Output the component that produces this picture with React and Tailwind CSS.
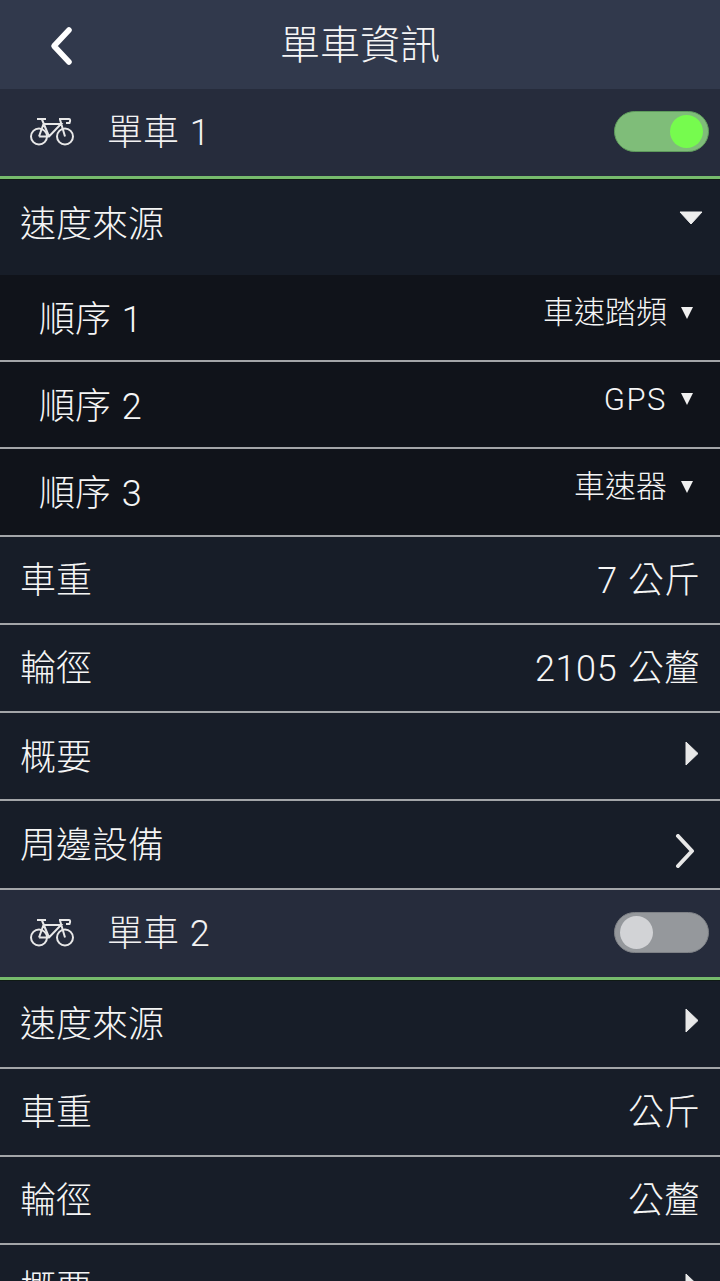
import React from 'react';

const font = 'font-["Roboto","Noto_Sans_CJK_TC",sans-serif]';

function BikeIcon() {
  return (
    <svg width="46" height="30" viewBox="0 0 46 30" fill="none" stroke="#e8e8e8" strokeWidth="2" className="shrink-0 -mt-[3px]">
      <circle cx="11" cy="20.5" r="8" />
      <circle cx="37" cy="20.5" r="8" />
      <path d="M11 20.5 L15.5 8 H33 L21 20.5 H11 M14 3.5 L21 20.5 M9 3 H18 M32 3.5 L37 20.5 M31 3 H41 Q43 3 41.5 7 H38" />
    </svg>
  );
}

function Toggle({ on }) {
  return on ? (
    <div className="w-[95px] h-[41px] -mt-[2px] rounded-full bg-[#7fbd79] border border-[#5e9a5c] flex items-center justify-end pr-[5px]">
      <div className="w-[33px] h-[33px] rounded-full bg-[#76fb4e]" />
    </div>
  ) : (
    <div className="w-[95px] h-[41px] -mt-[2px] rounded-full bg-[#95989c] border border-[#7e8186] flex items-center justify-start pl-[5px]">
      <div className="w-[33px] h-[33px] rounded-full bg-[#d2d3d6]" />
    </div>
  );
}

function BikeHeader({ name, on }) {
  return (
    <div className="h-[87px] bg-[#262c3c] flex items-center pl-[28px] pr-[11px]">
      <BikeIcon />
      <span className="ml-[33px] text-[36px] leading-none font-light text-[#f2f2f2] flex-1 mt-[1px]">{name}</span>
      <Toggle on={on} />
    </div>
  );
}

function GreenLine() {
  return <div className="h-[4px] bg-[#76bb6c] border-b border-[#0f1a14]" />;
}

function Row({ label, right, height = 'h-[88px]', labelShift = 'mt-[2px]' }) {
  return (
    <div className={`${height} bg-[#171d28] border-b-[2px] border-[#a3a5a8] flex items-center justify-between pl-[20px] pr-[22px]`}>
      <span className={`text-[36px] leading-none font-light text-[#f5f5f5] ${labelShift}`}>{label}</span>
      {right}
    </div>
  );
}

function Value({ children }) {
  return <span className="text-[36px] leading-none font-light text-[#f5f5f5] mt-[1px] -mr-[2px]">{children}</span>;
}

function SubRow({ label, value, height = 'h-[87px]', labelShift, valueShift = '-mt-[11px]' }) {
  return (
    <div className={`${height} bg-[#10131a] border-b-[2px] border-[#a3a5a8] flex items-center justify-between pl-[39px] pr-[27px]`}>
      <span className={`text-[36px] leading-none font-light text-[#f5f5f5] ${labelShift}`}>{label}</span>
      <span className={`flex items-center gap-[14px] ${valueShift}`}>
        <span className="text-[31px] leading-none font-light text-[#f5f5f5]">{value}</span>
        <svg width="12" height="12" viewBox="0 0 12 12"><path d="M0 0 H12 L6 12 Z" fill="#f0f0f0" /></svg>
      </span>
    </div>
  );
}

function TriRight({ className = '-mt-[5px]' }) {
  return (
    <svg width="14" height="25" viewBox="0 0 14 25" className={`-mr-[1px] ${className}`}>
      <path d="M1 1 L13 12.5 L1 24 Z" fill="#e8e8e8" stroke="#e8e8e8" strokeLinejoin="round" />
    </svg>
  );
}

function Chevron() {
  return (
    <svg width="22" height="34" viewBox="0 0 22 34" fill="none" className="mt-[12px] mr-[2px]">
      <path d="M4 2 L18 17 L4 32" stroke="#e8e8e8" strokeWidth="4" strokeLinecap="round" strokeLinejoin="round" />
    </svg>
  );
}

export default function App() {
  return (
    <div className={`w-[720px] h-[1281px] overflow-hidden bg-[#171d28] [word-spacing:2px] ${font}`}>
      <div className="h-[89px] bg-[#31394c] flex items-center justify-center relative">
        <svg width="26" height="40" viewBox="0 0 26 40" fill="none" className="absolute left-[48px] top-[26px]">
          <path d="M21 4 L6 20 L21 36" stroke="#fff" strokeWidth="5.5" strokeLinecap="round" strokeLinejoin="round" />
        </svg>
        <span className="text-[40px] leading-none font-light text-[#f5f5f5] mt-[2px]">單車資訊</span>
      </div>

      <BikeHeader name="單車 1" on />
      <GreenLine />
      <div className="h-[95px] bg-[#171d28] flex items-start justify-between pl-[20px] pr-[17px] pt-[25px]">
        <span className="text-[36px] leading-none font-light text-[#f5f5f5] mt-[2px]">速度來源</span>
        <svg width="24" height="14" viewBox="0 0 24 14" className="mt-[6px]"><path d="M1 1 H23 L12 13 Z" fill="#eeeeee" stroke="#eeeeee" strokeLinejoin="round" /></svg>
      </div>
      <SubRow label="順序 1" value="車速踏頻" labelShift="mt-[5px]" valueShift="-mt-[10px]" />
      <SubRow label="順序 2" value={<span className="tracking-[1.5px]">GPS</span>} labelShift="mt-[4px]" />
      <SubRow label="順序 3" value="車速器" height="h-[88px]" labelShift="mt-[3px]" />

      <Row label="車重" right={<Value>7 公斤</Value>} />
      <Row label="輪徑" right={<Value><span className="tracking-[0.6px]">2105</span> 公釐</Value>} />
      <Row label="概要" labelShift="mt-[3px]" right={<TriRight />} />
      <Row label="周邊設備" height="h-[89px]" right={<Chevron />} />

      <BikeHeader name="單車 2" />
      <GreenLine />
      <Row label="速度來源" right={<TriRight className="-mt-[8px]" />} />
      <Row label="車重" right={<Value>公斤</Value>} />
      <Row label="輪徑" right={<Value>公釐</Value>} />
      <Row label="概要" right={<TriRight />} />
    </div>
  );
}
